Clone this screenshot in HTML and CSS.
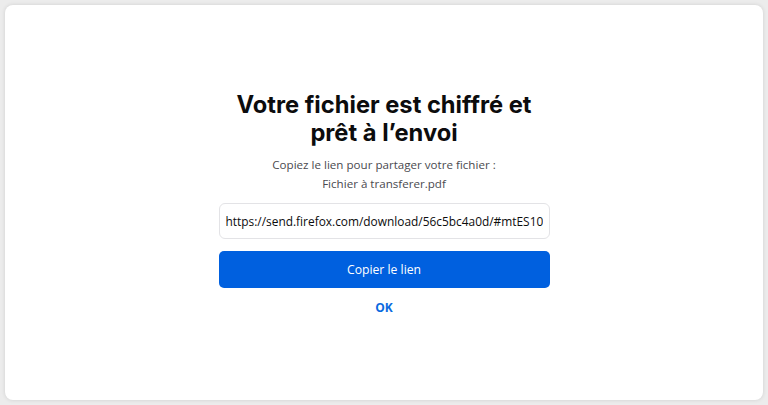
FILE: index.html
```html
<!DOCTYPE html>
<html lang="fr">
<head>
<meta charset="utf-8">
<title>Send</title>
<link rel="stylesheet" href="styles.css">
</head>
<body>
<main class="card">
  <section class="share">
    <h1 class="title">Votre fichier est chiffré et prêt à l’envoi</h1>
    <p class="sub">Copiez le lien pour partager votre fichier :<br>Fichier à transferer.pdf</p>
    <input class="link" type="text" readonly value="https://send.firefox.com/download/56c5bc4a0d/#mtES10yZqW3bQ1kXh2oLpA">
    <button class="copy" type="button">Copier le lien</button>
    <a class="ok" href="#">OK</a>
  </section>
</main>
</body>
</html>
```
FILE: styles.css
```css
html, body {
  margin: 0;
  padding: 0;
  height: 100%;
}
body {
  background: #ececec;
  padding: 5px;
  box-sizing: border-box;
  font-family: "Open Sans", "Noto Sans", sans-serif;
}
.card {
  background: #ffffff;
  border-radius: 8px;
  height: 100%;
  box-shadow: 0 0 4px rgba(0, 0, 0, 0.12);
  display: flex;
  justify-content: center;
  box-sizing: border-box;
  padding-top: 86px;
}
.share {
  width: 331px;
  display: flex;
  flex-direction: column;
  align-items: stretch;
  text-align: center;
}
.title {
  font-family: Inter, "Liberation Sans", sans-serif;
  font-weight: 700;
  font-size: 23.7px;
  line-height: 28px;
  margin: 0;
  color: #0c0c0d;
  padding: 0 4px;
}
.sub {
  margin: 8px 0 0;
  font-size: 11.6px;
  line-height: 19px;
  color: #4a4a4f;
}
.link {
  margin-top: 10px;
  height: 36px;
  box-sizing: border-box;
  border: 1px solid #e3e3e6;
  border-radius: 6px;
  padding: 0 6px;
  font-family: "Open Sans", "Noto Sans", sans-serif;
  font-size: 11.9px;
  color: #0c0c0d;
  background: #fff;
  outline: none;
}
.copy {
  margin-top: 12px;
  height: 37px;
  border: 0;
  border-radius: 5px;
  background: #0060df;
  color: #ffffff;
  font-family: "Open Sans", "Noto Sans", sans-serif;
  font-size: 12.2px;
}
.ok {
  margin-top: 11px;
  align-self: center;
  color: #0a6ae0;
  font-weight: 700;
  font-size: 12px;
  text-decoration: none;
}
```
